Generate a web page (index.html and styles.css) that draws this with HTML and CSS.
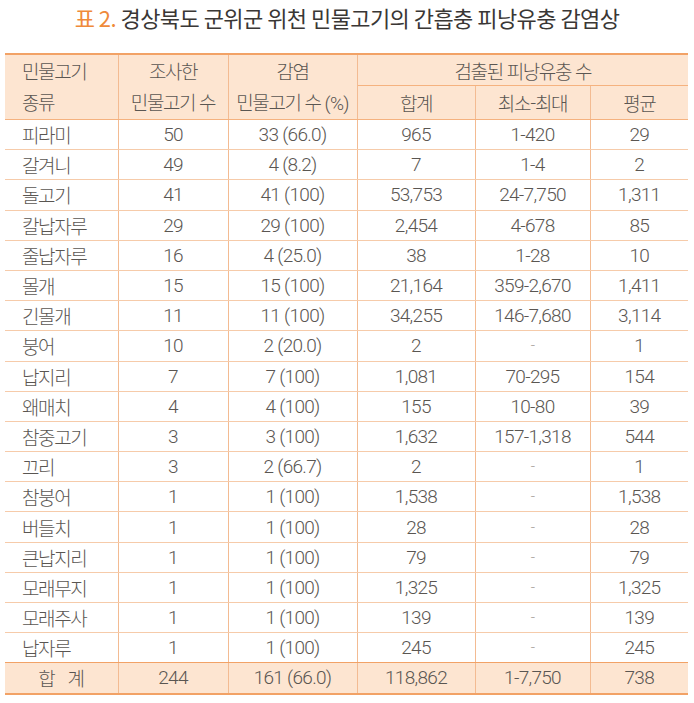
FILE: index.html
```html
<!DOCTYPE html>
<html lang="ko">
<head>
<meta charset="utf-8">
<link rel="stylesheet" href="styles.css">
</head>
<body>
<h1 class="title"><span class="num">표 2.</span> 경상북도 군위군 위천 민물고기의 간흡충 피낭유충 감염상</h1>
<table class="tbl">
<colgroup>
<col class="c1"><col class="c2"><col class="c3"><col class="c4"><col class="c5"><col class="c6">
</colgroup>
<thead>
<tr class="h1">
<th rowspan="2" class="left">민물고기<br>종류</th>
<th rowspan="2">조사한<br>민물고기 수</th>
<th rowspan="2">감염<br>민물고기 수 <span class="pct">(%)</span></th>
<th colspan="3" class="grp">검출된 피낭유충 수</th>
</tr>
<tr class="h2">
<th>합계</th><th>최소-최대</th><th>평균</th>
</tr>
</thead>
<tbody>
<tr><td class="left">피라미</td><td>50</td><td>33 (66.0)</td><td>965</td><td>1-420</td><td>29</td></tr>
<tr><td class="left">갈겨니</td><td>49</td><td>4 (8.2)</td><td>7</td><td>1-4</td><td>2</td></tr>
<tr><td class="left">돌고기</td><td>41</td><td>41 (100)</td><td>53,753</td><td>24-7,750</td><td>1,311</td></tr>
<tr><td class="left">칼납자루</td><td>29</td><td>29 (100)</td><td>2,454</td><td>4-678</td><td>85</td></tr>
<tr><td class="left">줄납자루</td><td>16</td><td>4 (25.0)</td><td>38</td><td>1-28</td><td>10</td></tr>
<tr><td class="left">몰개</td><td>15</td><td>15 (100)</td><td>21,164</td><td>359-2,670</td><td>1,411</td></tr>
<tr><td class="left">긴몰개</td><td>11</td><td>11 (100)</td><td>34,255</td><td>146-7,680</td><td>3,114</td></tr>
<tr><td class="left">붕어</td><td>10</td><td>2 (20.0)</td><td>2</td><td class="dash">-</td><td>1</td></tr>
<tr><td class="left">납지리</td><td>7</td><td>7 (100)</td><td>1,081</td><td>70-295</td><td>154</td></tr>
<tr><td class="left">왜매치</td><td>4</td><td>4 (100)</td><td>155</td><td>10-80</td><td>39</td></tr>
<tr><td class="left">참중고기</td><td>3</td><td>3 (100)</td><td>1,632</td><td>157-1,318</td><td>544</td></tr>
<tr><td class="left">끄리</td><td>3</td><td>2 (66.7)</td><td>2</td><td class="dash">-</td><td>1</td></tr>
<tr><td class="left">참붕어</td><td>1</td><td>1 (100)</td><td>1,538</td><td class="dash">-</td><td>1,538</td></tr>
<tr><td class="left">버들치</td><td>1</td><td>1 (100)</td><td>28</td><td class="dash">-</td><td>28</td></tr>
<tr><td class="left">큰납지리</td><td>1</td><td>1 (100)</td><td>79</td><td class="dash">-</td><td>79</td></tr>
<tr><td class="left">모래무지</td><td>1</td><td>1 (100)</td><td>1,325</td><td class="dash">-</td><td>1,325</td></tr>
<tr><td class="left">모래주사</td><td>1</td><td>1 (100)</td><td>139</td><td class="dash">-</td><td>139</td></tr>
<tr><td class="left">납자루</td><td>1</td><td>1 (100)</td><td>245</td><td class="dash">-</td><td>245</td></tr>
</tbody>
<tfoot>
<tr><td class="sum">합 계</td><td>244</td><td>161 (66.0)</td><td>118,862</td><td>1-7,750</td><td>738</td></tr>
</tfoot>
</table>
</body>
</html>
```
FILE: styles.css
```css
html, body {
  margin: 0;
  padding: 0;
  background: #ffffff;
}
body {
  font-family: Roboto, "Liberation Sans", "Noto Sans CJK KR", sans-serif;
  color: #5a5652;
}
.title {
  margin: 0;
  padding-top: 2px;
  height: 53px;
  box-sizing: border-box;
  text-align: center;
  font-family: "Noto Sans CJK KR", sans-serif;
  font-size: 22px;
  font-weight: 400;
  letter-spacing: -0.6px;
  word-spacing: -1px;
  line-height: 30px;
  color: #3a3735;
}
.title .num {
  color: #ef8a3a;
}
.tbl {
  margin-left: 5px;
  width: 683px;
  border-collapse: collapse;
  table-layout: fixed;
  border-top: 2px solid #f2a266;
  border-bottom: 2px solid #f2a266;
  font-size: 19px;
  font-weight: 300;
  letter-spacing: -0.7px;
}
.c1 { width: 113px; }
.c2 { width: 110px; }
.c3 { width: 129px; }
.c4 { width: 118px; }
.c5 { width: 115px; }
.c6 { width: 98px; }
th, td {
  padding: 0;
  text-align: center;
  font-weight: 300;
  border-left: 1px solid #f3bb92;
  border-right: 1px solid #f3bb92;
  white-space: nowrap;
}
th:first-child, td:first-child { border-left: none; }
th:last-child, td:last-child { border-right: none; }
thead th {
  background: #fde5d1;
  letter-spacing: -1.4px;
  font-family: "Noto Sans CJK KR", sans-serif;
  font-size: 19px;
}
.pct {
  font-family: Roboto, "Liberation Sans", sans-serif;
  letter-spacing: -0.7px;
}
.h1 th[rowspan] {
  vertical-align: top;
  line-height: 31px;
  border-bottom: 1px solid #f5b27f;
}
.h1 .grp {
  height: 29px;
  line-height: 29px;
  border-bottom: 1px solid #f5b27f;
}
.h2 th {
  height: 31px;
  line-height: 31px;
  border-bottom: 1px solid #f5b27f;
}
tbody td {
  height: 29.2px;
  line-height: 29px;
  border-bottom: 1px solid #f6cbaa;
}
tbody tr:last-child td { border-bottom: 1px solid #f2a266; }
.left {
  text-align: left;
  padding-left: 17px;
  font-family: "Noto Sans CJK KR", sans-serif;
  font-size: 19px;
  letter-spacing: -1.4px;
}
.dash { color: #a19b96; font-size: 15px; }
tfoot td {
  background: #fde5d1;
  height: 30px;
  line-height: 30px;
}
.sum {
  font-family: "Noto Sans CJK KR", sans-serif;
  font-size: 19px;
  word-spacing: 8px;
}
```
